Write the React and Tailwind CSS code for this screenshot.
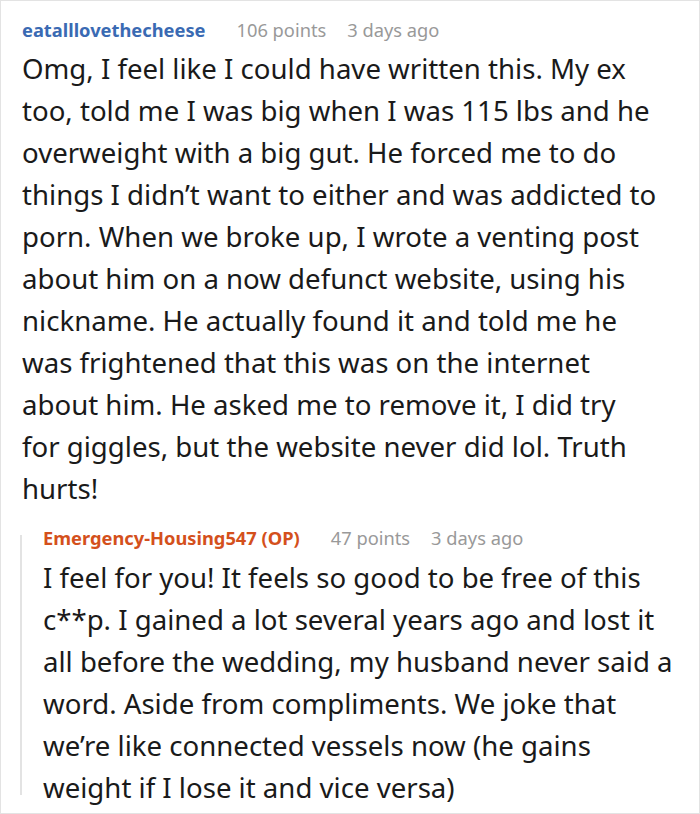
export default function App() {
  return (
    <div className="w-[700px] h-[814px] bg-white border border-[#e3e3e3] pl-[21px] pr-[39px] pt-[17px] text-[#1a1a1a] font-['Noto_Sans','Open_Sans',sans-serif]">
      <div className="flex items-center h-[24px] text-[18.3px] leading-[24px]">
        <span className="font-bold text-[#3a6ab3]">eatalllovethecheese</span>
        <span className="ml-[31px] text-[#999]">106 points</span>
        <span className="ml-[21px] text-[#999]">3 days ago</span>
      </div>
      <p className="mt-[5px] text-[27.6px] leading-[42px]">
        Omg, I feel like I could have written this. My ex too, told me I was big when I was 115 lbs and he overweight with a big gut. He forced me to do things I didn’t want to either and was addicted to porn. When we broke up, I wrote a venting post about him on a now defunct website, using his nickname. He actually found it and told me he was frightened that this was on the internet about him. He asked me to remove it, I did try for giggles, but the website never did lol. Truth hurts!
      </p>
      <div className="flex mt-[17px] -ml-[2px] -mr-[20px]">
        <div className="w-[2px] bg-[#e3e3e3] mt-[9px] mb-[13px] shrink-0"></div>
        <div className="pl-[21px]">
          <div className="flex items-center h-[24px] text-[18.3px] leading-[24px]">
            <span className="font-bold text-[#d4501c]">Emergency-Housing547 (OP)</span>
            <span className="ml-[31px] text-[#999]">47 points</span>
            <span className="ml-[21px] text-[#999]">3 days ago</span>
          </div>
          <p className="mt-[6px] text-[27.6px] leading-[42px]">
            I feel for you! It feels so good to be free of this c**p. I gained a lot several years ago and lost it all before the wedding, my husband never said a word. Aside from compliments. We joke that we’re like connected vessels now (he gains weight if I lose it and vice versa)
          </p>
        </div>
      </div>
    </div>
  );
}
